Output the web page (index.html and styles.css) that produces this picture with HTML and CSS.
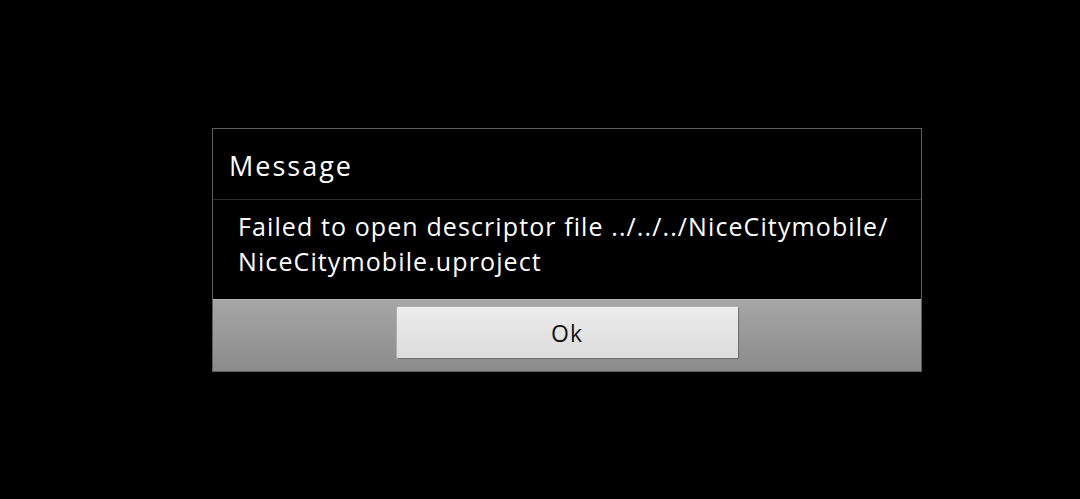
FILE: index.html
```html
<!DOCTYPE html>
<html>
<head>
<meta charset="utf-8">
<link rel="stylesheet" href="styles.css">
</head>
<body>
<div class="screen">
  <div class="dialog">
    <div class="title">Message</div>
    <div class="body">Failed to open descriptor file ../../../NiceCitymobile/<br>NiceCitymobile.uproject</div>
    <div class="actions">
      <button class="btn">Ok</button>
    </div>
  </div>
</div>
</body>
</html>
```
FILE: styles.css
```css
html, body {
  margin: 0;
  padding: 0;
  background: #000;
  width: 1080px;
  height: 499px;
  overflow: hidden;
}
.screen {
  padding-top: 128px;
  padding-left: 212px;
  font-family: "Open Sans", Lato, sans-serif;
}
.dialog {
  width: 708px;
  border: 1px solid #5e5e5e;
  background: #000;
}
.title {
  height: 71px;
  box-sizing: border-box;
  padding: 20px 0 0 16px;
  font-size: 27px;
  line-height: 34px;
  letter-spacing: 2px;
  color: #fff;
  border-bottom: 1px solid #2e2e2e;
}
.body {
  height: 99px;
  box-sizing: border-box;
  padding: 9px 10px 0 25px;
  font-size: 25px;
  line-height: 35px;
  letter-spacing: 1.1px;
  color: #fff;
}
.actions {
  height: 72px;
  box-sizing: border-box;
  border-top: 1px solid #b4b4b4;
  background: linear-gradient(#a6a6a6, #8b8b8b);
  display: flex;
  justify-content: center;
  padding-top: 7px;
}
.btn {
  width: 341px;
  height: 51px;
  margin: 0;
  padding: 0;
  border: none;
  border-radius: 1px;
  background: linear-gradient(#ececec, #dcdcdc);
  box-shadow: 1px 1px 1px #6a6a6a, 0 0 0 1px #b0b0b0;
  font-family: "Open Sans", Lato, sans-serif;
  font-size: 23px;
  letter-spacing: 1px;
  color: #111;
}
```
